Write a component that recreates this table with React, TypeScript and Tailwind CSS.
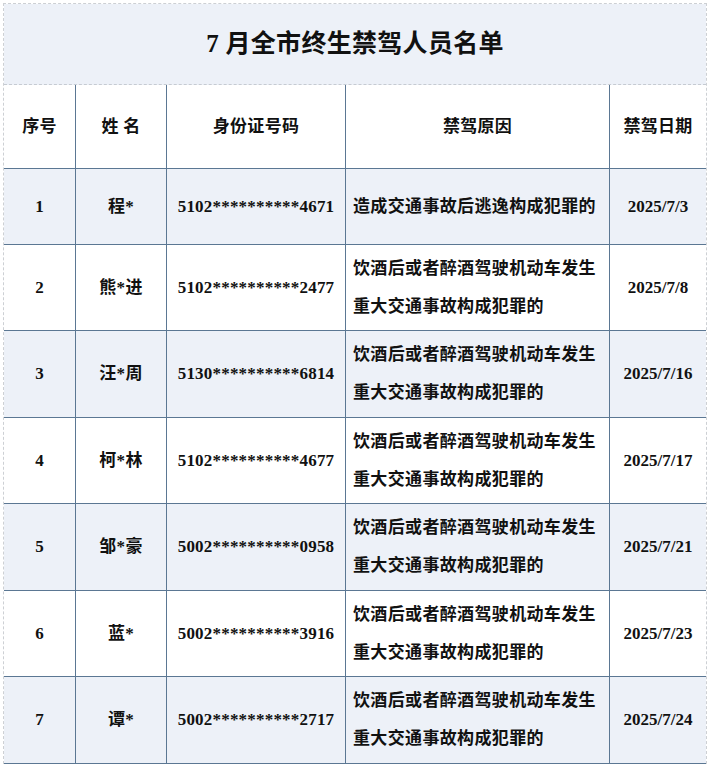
import React from 'react'

type Row = { no: string; name: string; id: string; reason: string[]; date: string; h: string }

const rows: Row[] = [
  { no: '1', name: '程*', id: '5102**********4671', reason: ['造成交通事故后逃逸构成犯罪的'], date: '2025/7/3', h: 'h-[76px]' },
  { no: '2', name: '熊*进', id: '5102**********2477', reason: ['饮酒后或者醉酒驾驶机动车发生', '重大交通事故构成犯罪的'], date: '2025/7/8', h: 'h-[86px]' },
  { no: '3', name: '汪*周', id: '5130**********6814', reason: ['饮酒后或者醉酒驾驶机动车发生', '重大交通事故构成犯罪的'], date: '2025/7/16', h: 'h-[87px]' },
  { no: '4', name: '柯*林', id: '5102**********4677', reason: ['饮酒后或者醉酒驾驶机动车发生', '重大交通事故构成犯罪的'], date: '2025/7/17', h: 'h-[86px]' },
  { no: '5', name: '邹*豪', id: '5002**********0958', reason: ['饮酒后或者醉酒驾驶机动车发生', '重大交通事故构成犯罪的'], date: '2025/7/21', h: 'h-[87px]' },
  { no: '6', name: '蓝*', id: '5002**********3916', reason: ['饮酒后或者醉酒驾驶机动车发生', '重大交通事故构成犯罪的'], date: '2025/7/23', h: 'h-[86px]' },
  { no: '7', name: '谭*', id: '5002**********2717', reason: ['饮酒后或者醉酒驾驶机动车发生', '重大交通事故构成犯罪的'], date: '2025/7/24', h: 'h-[87px]' },
]

// column widths incl. right border
const cols = ['w-[72px]', 'w-[91px]', 'w-[179px]', 'w-[264px]', 'w-[96px]']

const cell = 'flex items-center justify-center border-r border-[#5b7793] shrink-0'

export default function App() {
  return (
    <div
      className="w-[710px] h-[766px] bg-white pt-[3px] pl-[3px] text-[#111]"
      style={{ fontFamily: '"Liberation Serif", "Noto Sans CJK SC", serif' }}
    >
      <div className="w-[704px] border-l border-r border-t border-dashed border-l-[#cdd0d4] border-r-[#cdd0d4] border-t-[#cdd0d4]">
        {/* title */}
        <div className="h-[81px] bg-[#edf1f8] border-b border-dashed border-[#c6cbd2] flex items-center justify-center">
          <span className="text-[25px] font-bold tracking-[0.3px]">7 月全市终生禁驾人员名单</span>
        </div>

        {/* header */}
        <div className="h-[84px] flex border-b border-[#5b7793] bg-white text-[17px] font-bold tracking-[0.3px]">
          <div className={`${cell} ${cols[0]}`}>序号</div>
          <div className={`${cell} ${cols[1]}`}>姓&nbsp;名</div>
          <div className={`${cell} ${cols[2]}`}>身份证号码</div>
          <div className={`${cell} ${cols[3]}`}>禁驾原因</div>
          <div className={`${cell} ${cols[4]} border-r-0`}>禁驾日期</div>
        </div>

        {rows.map((r, i) => (
          <div
            key={r.no}
            className={`${r.h} flex border-b border-[#5b7793] text-[17px] font-bold ${i % 2 === 0 ? 'bg-[#edf1f8]' : 'bg-white'}`}
          >
            <div className={`${cell} ${cols[0]}`}>{r.no}</div>
            <div className={`${cell} ${cols[1]} tracking-[0.3px]`}>{r.name}</div>
            <div className={`${cell} ${cols[2]} tracking-[0.2px]`}>{r.id}</div>
            <div className={`${cell} ${cols[3]} !justify-start pl-[7px]`}>
              <div className="leading-[38px] tracking-[0.35px]">
                {r.reason.map(line => (
                  <div key={line}>{line}</div>
                ))}
              </div>
            </div>
            <div className={`${cell} ${cols[4]} border-r-0`}>{r.date}</div>
          </div>
        ))}
      </div>
    </div>
  )
}
